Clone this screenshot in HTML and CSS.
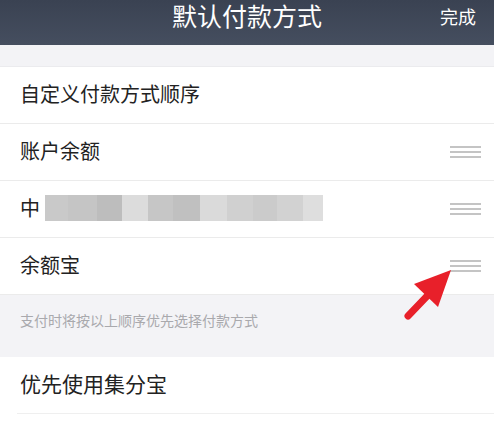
FILE: index.html
```html
<!DOCTYPE html>
<html lang="zh-CN">
<head>
  <meta charset="UTF-8" />
  <meta name="viewport" content="width=device-width, initial-scale=1.0" />
  <title>默认付款方式</title>
  <link rel="stylesheet" href="styles.css">
</head>
<body>
  <div class="page">
    <div class="topbar">
      <span></span>
      <h1 class="title">默认付款方式</h1>
      <span class="done">完成</span>
    </div>

    <div class="gap"></div>

    <div class="group">
      <div class="row first">自定义付款方式顺序</div>
      <div class="row">
        <span>账户余额</span>
        <span class="handle"><i></i><i></i><i></i></span>
      </div>
      <div class="row">
        <span class="bank">中<span class="mosaic">
          <b class="c1"></b><b class="c2"></b><b class="c3"></b><b class="c4"></b><b class="c5"></b><b class="c6"></b><b class="c7"></b><b class="c8"></b><b class="c9"></b><b class="c10"></b><b class="c11"></b>
        </span></span>
        <span class="handle"><i></i><i></i><i></i></span>
      </div>
      <div class="row">
        <span>余额宝</span>
        <span class="handle"><i></i><i></i><i></i></span>
      </div>
    </div>

    <div class="note">支付时将按以上顺序优先选择付款方式</div>

    <div class="group">
      <div class="row big">优先使用集分宝</div>
    </div>

    <!-- 红色箭头标注 -->
    <svg class="arrow" width="60" height="60" viewBox="0 0 60 60">
      <line x1="8" y1="52" x2="30" y2="29" stroke="#e8202a" stroke-width="7" stroke-linecap="round"/>
      <polygon points="51,6 14,20 38,43" fill="#e8202a"/>
    </svg>
  </div>
</body>
</html>
```

FILE: styles.css
```css
body {
  margin: 0;
  font-family: "Noto Sans CJK SC", "Noto Sans", sans-serif;
  background: #fff;
}
.page {
  position: relative;
  width: 494px;
  height: 427px;
  overflow: hidden;
}
.topbar {
  height: 45px;
  display: grid;
  grid-template-columns: 1fr auto 1fr;
  align-items: start;
  background: linear-gradient(#3a4252, #454e5f);
  color: #fff;
}
.title {
  margin: 1px 0 0;
  font-size: 25px;
  font-weight: normal;
  line-height: 29px;
}
.done {
  justify-self: end;
  margin-right: 18px;
  margin-top: 3px;
  font-size: 18px;
  line-height: 26px;
}
.gap {
  height: 21px;
  background: #f3f3f6;
  border-bottom: 1px solid #ebebee;
}
.group {
  background: #fff;
}
.row {
  height: 57px;
  box-sizing: border-box;
  display: flex;
  align-items: center;
  justify-content: space-between;
  padding: 0 13px 4px 20px;
  font-size: 20px;
  color: #222;
  border-bottom: 1px solid #ebebeb;
}
.row.first {
  height: 57px;
}
.row .handle {
  margin-top: 4px;
}
.row.big {
  font-size: 21px;
  height: 57px;
  margin-left: 17px;
  padding-left: 3px;
  border-bottom-color: #efefef;
}
.handle {
  display: flex;
  flex-direction: column;
  gap: 3px;
  width: 31px;
}
.handle i {
  display: block;
  height: 2px;
  background: #c4c4c4;
}
.bank {
  display: flex;
  align-items: center;
}
.mosaic {
  display: flex;
  height: 26px;
  margin-left: 5px;
  margin-top: 2px;
}
.mosaic b { display: block; height: 26px; }
.c1 { width: 23px; background: #c9c9c9; }
.c2 { width: 29px; background: #c5c5c5; }
.c3 { width: 25px; background: #bdbdbd; }
.c4 { width: 26px; background: #dcdcdc; }
.c5 { width: 25px; background: #c6c6c6; }
.c6 { width: 27px; background: #c0c0c0; }
.c7 { width: 27px; background: #dadada; }
.c8 { width: 26px; background: #d0d0d0; }
.c9 { width: 24px; background: #cbcbcb; }
.c10 { width: 26px; background: #d2d2d2; }
.c11 { width: 20px; background: #dedede; }
.note {
  height: 62px;
  box-sizing: border-box;
  background: #f3f3f6;
  padding: 14px 0 0 20px;
  font-size: 14px;
  line-height: 22px;
  color: #a9a9ad;
}
.arrow {
  position: absolute;
  left: 400px;
  top: 264px;
}
```
